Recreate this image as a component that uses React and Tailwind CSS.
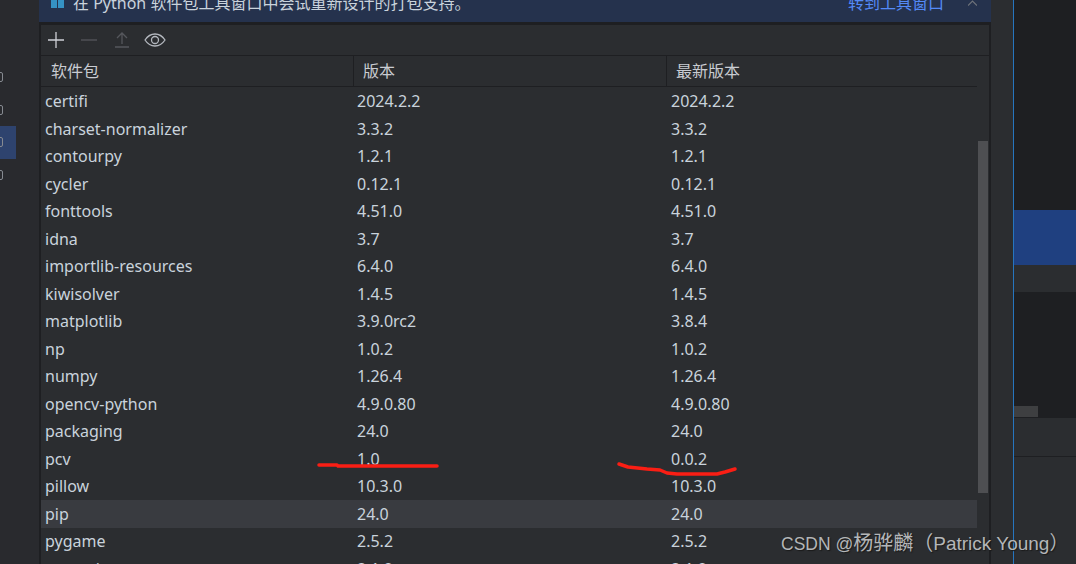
const rows = [
  ["certifi", "2024.2.2", "2024.2.2"],
  ["charset-normalizer", "3.3.2", "3.3.2"],
  ["contourpy", "1.2.1", "1.2.1"],
  ["cycler", "0.12.1", "0.12.1"],
  ["fonttools", "4.51.0", "4.51.0"],
  ["idna", "3.7", "3.7"],
  ["importlib-resources", "6.4.0", "6.4.0"],
  ["kiwisolver", "1.4.5", "1.4.5"],
  ["matplotlib", "3.9.0rc2", "3.8.4"],
  ["np", "1.0.2", "1.0.2"],
  ["numpy", "1.26.4", "1.26.4"],
  ["opencv-python", "4.9.0.80", "4.9.0.80"],
  ["packaging", "24.0", "24.0"],
  ["pcv", "1.0", "0.0.2"],
  ["pillow", "10.3.0", "10.3.0"],
  ["pip", "24.0", "24.0"],
  ["pygame", "2.5.2", "2.5.2"],
  ["pyparsing", "3.1.2", "3.1.2"],
];

const Row = ({ name, version, latest }) => (
  <div className={`flex h-[27.5px] shrink-0 items-center text-[16px] text-[#c9d3dc] ${name === "pip" ? "bg-[#393b40]" : ""}`}>
    <span className="w-[316px] pl-[4px]">{name}</span>
    <span className="w-[314px]">{version}</span>
    <span>{latest}</span>
  </div>
);

export default function App() {
  return (
    <div
      className="relative flex h-[564px] w-[1076px] overflow-hidden bg-[#2b2d30]"
      style={{ fontFamily: '"Noto Sans", "Noto Sans CJK SC", sans-serif' }}
    >
      {/* left edge */}
      <div className="flex w-[39px] shrink-0 flex-col bg-[#292a2e] pt-[61px]">
        {[0, 1, 2, 3].map((i) => (
          <div key={i} className={`flex h-[32.5px] w-[16px] items-center ${i === 2 ? "bg-[#2e436e]" : ""}`}>
            <span className="ml-[-4px] h-[10px] w-[7px] rounded-[2px] border border-[#868a91]" />
          </div>
        ))}
      </div>

      {/* dialog */}
      <div className="flex w-[952px] shrink-0 flex-col">
        <div className="flex h-[22px] shrink-0 items-end overflow-hidden bg-[#25324d] pb-[7px]">
          <div className="mb-[7px] ml-[12px] mr-[9px] grid h-[9px] w-[13px] grid-cols-2 gap-[1px]">
            <span className="bg-[#3592c4]" />
            <span className="bg-[#3592c4]" />
          </div>
          <span className="text-[16px] leading-[24px] text-[#c9d3dc]">在 Python 软件包工具窗口中会试重新设计的打包支持。</span>
          <span className="ml-auto mr-[24px] text-[16px] leading-[24px] text-[#548af7]">转到工具窗口</span>
          <svg className="mb-[9px] mr-[14px]" width="9" height="6" viewBox="0 0 9 6" fill="none" stroke="#6f737a" strokeWidth="1.2">
            <path d="M0 5.500L4.500 1 9 5.500" />
          </svg>
        </div>

        <div className="flex min-h-0 flex-1 bg-[#1e1f22] px-[2px] pt-[3px]">
          <div className="flex min-w-0 flex-1 flex-col bg-[#2b2d30]">
            <div className="flex h-[31px] shrink-0 items-center border-b border-[#1e1f22] pl-[5px]">
              <svg width="20" height="20" viewBox="0 0 20 20" fill="none" stroke="#ced0d6" strokeWidth="1.3"><path d="M2 10h16M10 2v16" /></svg>
              <svg className="ml-[13px]" width="20" height="20" viewBox="0 0 20 20" fill="none" stroke="#55575c" strokeWidth="1.3"><path d="M2 10h16" /></svg>
              <svg className="ml-[14px]" width="18" height="20" viewBox="0 0 18 20" fill="none" stroke="#55575c" strokeWidth="1.3"><path d="M2 17h14M9 14V3M4 8l5-5 5 5" /></svg>
              <svg className="ml-[13px]" width="22" height="20" viewBox="0 0 22 20" fill="none" stroke="#b4b8bf" strokeWidth="1.3"><path d="M1 10c3-4.500 6-6 10-6s7 1.500 10 6c-3 4.500-6 6-10 6s-7-1.500-10-6z" /><circle cx="11" cy="10" r="3.500" /></svg>
            </div>

            <div className="mr-[12px] flex h-[31px] shrink-0 items-center border-b border-[#1e1f22] text-[16px] text-[#c9ccd2]">
              <span className="flex h-full w-[313px] items-center border-r border-[#1e1f22] pl-[10px]">软件包</span>
              <span className="flex h-full w-[313px] items-center border-r border-[#1e1f22] pl-[9px]">版本</span>
              <span className="pl-[9px]">最新版本</span>
            </div>

            <div className="relative flex min-h-0 flex-1 overflow-hidden pt-[0.5px]">
              <div className="mr-[12px] flex min-w-0 flex-1 flex-col">
                {rows.map((r) => (
                  <Row key={r[0]} name={r[0]} version={r[1]} latest={r[2]} />
                ))}
              </div>
              <div className="absolute right-[1px] top-[54px] h-[352px] w-[10px] bg-[#4e4f52]" />
            </div>
          </div>
        </div>
      </div>

      {/* gutter between dialog and the window behind */}
      <div className="w-[23px] shrink-0 border-r border-[#2675bf]" />

      {/* window behind */}
      <div className="flex min-w-0 flex-1 flex-col">
        <div className="h-[210px] shrink-0 bg-[#1e1f22]" />
        <div className="h-[55px] shrink-0 bg-[#1f4080]" />
        <div className="h-[27px] shrink-0 bg-[#2b2d30]" />
        <div className="flex h-[126px] shrink-0 items-end bg-[#1e1f22]">
          <div className="mb-[1px] h-[11px] w-[24px] bg-[#3e3f41]" />
        </div>
        <div className="h-[39px] shrink-0 border-b border-[#1e1f22] bg-[#2b2d30]" />
        <div className="flex-1 bg-[#2b2d30]" />
      </div>

      {/* red marks drawn over the screenshot */}
      <svg className="absolute left-0 top-0" width="1076" height="564" fill="none" stroke="#fa1e14" strokeWidth="3.500" strokeLinecap="round" strokeLinejoin="round">
        <path d="M319 465h18l1 1h99" />
        <path d="M619 464l9 3 19 2 13 1 7 3 10 1h40l8-2 10-3" />
      </svg>

      <span
        className="absolute left-[781px] top-[531px] whitespace-nowrap text-[17.500px] leading-[24px] text-[#b4b6b8] [text-shadow:1px_1px_1px_#1a1a1a]"
        style={{ fontFamily: '"Liberation Sans", "Noto Sans CJK SC", sans-serif' }}
      >
        CSDN @<span className="text-[20px]">杨骅麟（</span><span className="text-[19px]">Patrick Young</span><span className="text-[19px]">）</span>
      </span>
    </div>
  );
}
